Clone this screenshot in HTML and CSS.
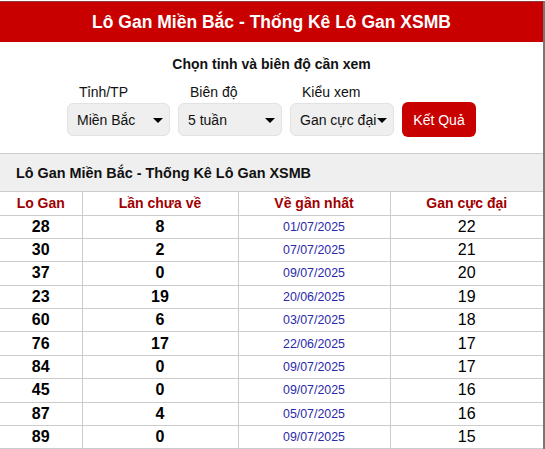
FILE: index.html
```html
<!DOCTYPE html>
<html lang="vi">
<head>
    <meta charset="UTF-8">
    <meta name="viewport" content="width=device-width, initial-scale=1.0">
    <title>Lô Gan Miền Bắc - Thống Kê Lô Gan XSMB</title>
    <link rel="stylesheet" href="styles.css">
</head>
<body>
    <div class="top-strip"></div>
    <div class="logan-box">
        <h1 class="logan-title">Lô Gan Miền Bắc - Thống Kê Lô Gan XSMB</h1>

        <form class="filter-form">
            <p class="filter-caption">Chọn tỉnh và biên độ cần xem</p>
            <div class="filter-row">
                <div class="filter-item">
                    <label>Tỉnh/TP</label>
                    <div class="select-box w103">Miền Bắc</div>
                </div>
                <div class="filter-item">
                    <label>Biên độ</label>
                    <div class="select-box w104">5 tuần</div>
                </div>
                <div class="filter-item">
                    <label>Kiểu xem</label>
                    <div class="select-box w104">Gan cực đại</div>
                </div>
                <button type="button" class="btn-result">Kết Quả</button>
            </div>
        </form>

        <div class="table-title">Lô Gan Miền Bắc - Thống Kê Lô Gan XSMB</div>

        <table class="logan-table">
            <thead>
                <tr>
                    <th class="c1">Lo Gan</th>
                    <th class="c2">Lần chưa về</th>
                    <th class="c3">Về gần nhất</th>
                    <th class="c4">Gan cực đại</th>
                </tr>
            </thead>
            <tbody>
                <tr><td class="num">28</td><td class="num">8</td><td class="date">01/07/2025</td><td class="max">22</td></tr>
                <tr><td class="num">30</td><td class="num">2</td><td class="date">07/07/2025</td><td class="max">21</td></tr>
                <tr><td class="num">37</td><td class="num">0</td><td class="date">09/07/2025</td><td class="max">20</td></tr>
                <tr><td class="num">23</td><td class="num">19</td><td class="date">20/06/2025</td><td class="max">19</td></tr>
                <tr><td class="num">60</td><td class="num">6</td><td class="date">03/07/2025</td><td class="max">18</td></tr>
                <tr><td class="num">76</td><td class="num">17</td><td class="date">22/06/2025</td><td class="max">17</td></tr>
                <tr><td class="num">84</td><td class="num">0</td><td class="date">09/07/2025</td><td class="max">17</td></tr>
                <tr><td class="num">45</td><td class="num">0</td><td class="date">09/07/2025</td><td class="max">16</td></tr>
                <tr><td class="num">87</td><td class="num">4</td><td class="date">05/07/2025</td><td class="max">16</td></tr>
                <tr><td class="num">89</td><td class="num">0</td><td class="date">09/07/2025</td><td class="max">15</td></tr>
            </tbody>
        </table>
    </div>
</body>
</html>
```

FILE: styles.css
```css
* {
    margin: 0;
    padding: 0;
    box-sizing: border-box;
}

body {
    font-family: 'Liberation Sans', Arial, sans-serif;
    background: white;
    color: #000;
    overflow: hidden;
}

.top-strip {
    height: 1px;
    width: 543px;
}

.logan-box {
    width: 545px;
    border-right: 2px solid #777;
    border-top: 1px solid #8a3b3b;
}

.logan-title {
    background: #c80000;
    color: white;
    font-size: 17.5px;
    font-weight: bold;
    text-align: center;
    height: 40px;
    line-height: 40px;
}

.filter-form {
    padding-top: 14px;
    height: 112px;
    border-bottom: 1px solid #ccc;
}

.filter-caption {
    text-align: center;
    font-size: 14px;
    font-weight: bold;
    line-height: 17px;
    color: #111;
}

.filter-row {
    display: flex;
    justify-content: center;
    align-items: flex-end;
    gap: 8px;
    margin-top: 11px;
}

.filter-item {
    display: flex;
    flex-direction: column;
}

.filter-item label {
    font-size: 14px;
    line-height: 16px;
    padding-left: 12px;
    margin-bottom: 3px;
    color: #111;
}

.select-box {
    position: relative;
    height: 33px;
    line-height: 33px;
    background: #efefef;
    border: 1px solid #e2e2e2;
    border-radius: 6px;
    font-size: 14px;
    padding-left: 9px;
    color: #111;
    white-space: nowrap;
}

.select-box::after {
    content: '';
    position: absolute;
    right: 6px;
    top: 14px;
    border-left: 5px solid transparent;
    border-right: 5px solid transparent;
    border-top: 5px solid #000;
}

.w103 {
    width: 103px;
}

.w104 {
    width: 104px;
}

.btn-result {
    width: 74px;
    height: 35px;
    background: #c80000;
    color: white;
    border: none;
    border-radius: 6px;
    font-family: inherit;
    font-size: 14px;
    margin-bottom: -1px;
}

.table-title {
    background: #efefef;
    height: 38px;
    line-height: 38px;
    padding-left: 16px;
    font-size: 14.4px;
    font-weight: bold;
    color: #111;
    border-bottom: 1px solid #ccc;
}

.logan-table {
    width: 543px;
    border-collapse: collapse;
    table-layout: fixed;
}

.logan-table th,
.logan-table td {
    border: 1px solid #ccc;
    text-align: center;
    height: 23.4px;
    padding: 0;
}

.logan-table th {
    border-top: none;
    color: #a00000;
    font-size: 14px;
    font-weight: bold;
    height: 23px;
}

.logan-table tr > :first-child {
    border-left: none;
}

.logan-table tr > :last-child {
    border-right: none;
}

.c1 {
    width: 82px;
}

.c2 {
    width: 156px;
}

.c3 {
    width: 152px;
}

.c4 {
    width: 153px;
}

.num {
    font-size: 16px;
    font-weight: bold;
}

.date {
    font-size: 12.4px;
    color: #2a2aaa;
}

.max {
    font-size: 16px;
}
```
